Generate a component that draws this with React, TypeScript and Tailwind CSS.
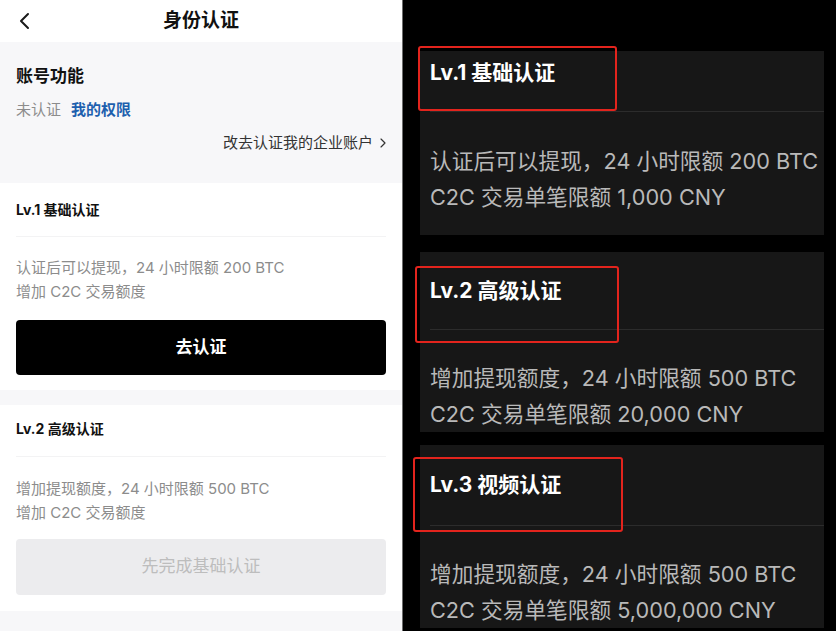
import { ChevronRight } from 'lucide-react'

const font = { fontFamily: 'Inter, "Noto Sans CJK SC", sans-serif' }

type Level = {
  title: string
  lines: string[]
  action: string
  enabled: boolean
}

const levels: Level[] = [
  {
    title: 'Lv.1 基础认证',
    lines: ['认证后可以提现，24 小时限额 200 BTC', '增加 C2C 交易额度'],
    action: '去认证',
    enabled: true,
  },
  {
    title: 'Lv.2 高级认证',
    lines: ['增加提现额度，24 小时限额 500 BTC', '增加 C2C 交易额度'],
    action: '先完成基础认证',
    enabled: false,
  },
]

function BackIcon() {
  return (
    <svg width="12" height="18" viewBox="0 0 12 18" fill="none">
      <polyline points="9,2 2,9 9,16" stroke="#1a1a1a" strokeWidth="2" strokeLinecap="round" strokeLinejoin="round" />
    </svg>
  )
}

function LevelCard({ level, first }: { level: Level; first: boolean }) {
  return (
    <div className={`bg-white px-4 ${first ? 'pt-[17px] pb-[15px]' : 'pt-[14px] pb-4'}`}>
      <div className={`border-b border-[#f3f3f4] ${first ? 'pb-4' : 'pb-[17px]'}`}>
        <p className="text-[14px] leading-5 font-bold text-[#111]">{level.title}</p>
      </div>
      <div className={first ? 'pt-[19px]' : 'pt-5'}>
        {level.lines.map((line) => (
          <p key={line} className="text-[15px] leading-6 text-[#8c8c8c]">
            {line}
          </p>
        ))}
      </div>
      {level.enabled ? (
        <button className="mt-4 flex h-[55px] w-full items-center justify-center rounded bg-black text-[17px] font-bold text-white">
          {level.action}
        </button>
      ) : (
        <button className="mt-[14px] flex h-[56px] w-full items-center justify-center rounded bg-[#ececee] text-[17px] text-[#bdbdbd]">
          {level.action}
        </button>
      )}
    </div>
  )
}

function AppView() {
  return (
    <div className="flex h-[631px] w-[402px] shrink-0 flex-col bg-[#f7f7f9]">
      {/* Top bar */}
      <div className="grid h-[42px] grid-cols-[40px_1fr_40px] items-center bg-white">
        <div className="pl-[19px]">
          <BackIcon />
        </div>
        <h1 className="text-center text-[19px] font-bold text-[#111]">身份认证</h1>
        <div />
      </div>

      {/* Account status */}
      <div className="h-[141px] px-4 pt-[22px]">
        <p className="text-[17px] leading-6 font-bold text-[#111]">账号功能</p>
        <div className="mt-[11px] flex gap-[10px] text-[15px] leading-[22px]">
          <span className="text-[#8c8c8c]">未认证</span>
          <span className="font-semibold text-[#1d5fae]">我的权限</span>
        </div>
        <div className="mt-[11px] -mr-[5px] flex items-center justify-end text-[15px] leading-[22px] text-[#333]">
          <span>改去认证我的企业账户</span>
          <ChevronRight className="ml-[2px] h-4 w-4" strokeWidth={1.75} />
        </div>
      </div>

      <LevelCard level={levels[0]} first />
      <div className="h-[15px]" />
      <LevelCard level={levels[1]} first={false} />
    </div>
  )
}

type Tier = {
  title: string
  lines: string[]
  pad: string
}

const tiers: Tier[] = [
  {
    title: 'Lv.1 基础认证',
    lines: ['认证后可以提现，24 小时限额 200 BTC', 'C2C 交易单笔限额 1,000 CNY'],
    pad: 'mt-[51px] pt-2 pb-[20px]',
  },
  {
    title: 'Lv.2 高级认证',
    lines: ['增加提现额度，24 小时限额 500 BTC', 'C2C 交易单笔限额 20,000 CNY'],
    pad: 'mt-[17px] pt-[25px] pb-0',
  },
  {
    title: 'Lv.3 视频认证',
    lines: ['增加提现额度，24 小时限额 500 BTC', 'C2C 交易单笔限额 5,000,000 CNY'],
    pad: 'mt-[13px] pt-[26px] pb-0',
  },
]

function DarkView() {
  return (
    <div className="relative h-[631px] flex-1 overflow-hidden border-l border-[#6e6e6e] bg-black pl-[17px] pr-3">
      {tiers.map((tier, i) => (
        <div key={tier.title} className={`bg-[#171717] ${tier.pad}`}>
          <div className={`ml-[10px] border-b border-[#2c2c2c] ${i === 2 ? 'pb-[26px]' : 'pb-6'}`}>
            <p className="text-[21px] leading-7 font-bold text-white">{tier.title}</p>
          </div>
          <div className={`pl-[10px] ${i === 0 ? 'pt-[31px]' : 'pt-[30px]'}`}>
            {tier.lines.map((line) => (
              <p key={line} className="whitespace-nowrap text-[21.7px] leading-9 text-[#b9b9b9]">
                {line}
              </p>
            ))}
          </div>
        </div>
      ))}

      {/* highlight frames over the level titles */}
      <div className="pointer-events-none absolute left-[15px] top-[46px] h-[65px] w-[199px] rounded-[3px] border-[2.5px] border-[#e3241d]" />
      <div className="pointer-events-none absolute left-[12px] top-[266px] h-[77px] w-[204px] rounded-[3px] border-[2.5px] border-[#e3241d]" />
      <div className="pointer-events-none absolute left-[10px] top-[457px] h-[75px] w-[210px] rounded-[3px] border-[2.5px] border-[#e3241d]" />
    </div>
  )
}

export default function App() {
  return (
    <div className="flex h-[631px] w-[836px] overflow-hidden bg-black" style={font}>
      <AppView />
      <DarkView />
    </div>
  )
}
